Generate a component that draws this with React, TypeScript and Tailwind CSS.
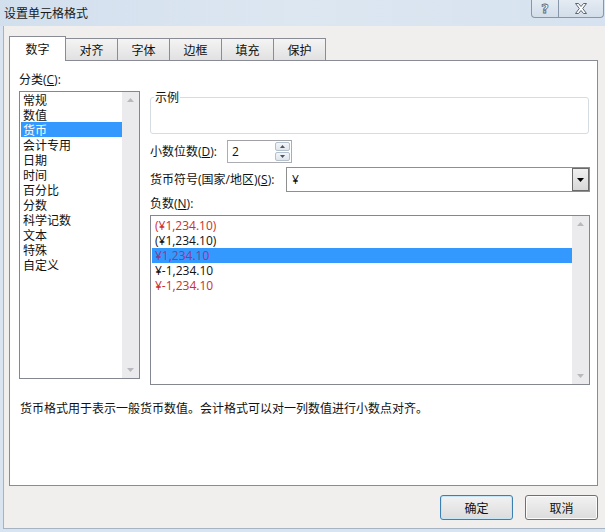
import React from "react";

const cats = ["常规", "数值", "货币", "会计专用", "日期", "时间", "百分比", "分数", "科学记数", "文本", "特殊", "自定义"];
const negs = [
  { t: "(¥1,234.10)", c: "text-[#cc2f2f]", sel: false },
  { t: "(¥1,234.10)", c: "text-[#111]", sel: false },
  { t: "¥1,234.10", c: "text-[#8b3a8e]", sel: true },
  { t: "¥-1,234.10", c: "text-[#111]", sel: false },
  { t: "¥-1,234.10", c: "text-[#cc2f2f]", sel: false },
];
const tabs = ["对齐", "字体", "边框", "填充", "保护"];

function ArrowUp() {
  return (
    <svg width="7" height="4" viewBox="0 0 7 4">
      <path d="M3.5 0 L7 4 L0 4 Z" fill="#b9b9bd" />
    </svg>
  );
}
function ArrowDown() {
  return (
    <svg width="7" height="4" viewBox="0 0 7 4">
      <path d="M0 0 L7 0 L3.5 4 Z" fill="#b9b9bd" />
    </svg>
  );
}

function ScrollBar() {
  return (
    <div className="w-[17px] h-full bg-[#ebebee] flex flex-col items-center justify-between py-[6px]">
      <ArrowUp />
      <ArrowDown />
    </div>
  );
}

export default function App() {
  return (
    <div className="w-[605px] h-[532px] bg-[#d9e4f0] flex flex-col text-[12px] leading-[16px] text-[#111] font-['Open_Sans','Noto_Sans_CJK_SC',sans-serif] overflow-hidden">
      {/* title bar */}
      <div className="h-[26px] shrink-0 flex items-start bg-gradient-to-r from-[#d2dfed] via-[#dde7f2] to-[#d6e2ef]">
        <div className="pl-[4px] pt-[5px] font-['Noto_Sans_CJK_SC',sans-serif] text-[#1a1a1a]">设置单元格格式</div>
        <div className="ml-auto mr-[1px] flex h-[18px]">
          <div className="w-[28px] h-[18px] border border-t-0 border-[#8796a8] rounded-bl-[4px] bg-gradient-to-b from-[#e4ebf3] to-[#d3deea] flex items-center justify-center">
            <span className="text-[13px] leading-[13px] font-bold text-white [-webkit-text-stroke:0.8px_#5b6573] font-['DejaVu_Sans',sans-serif]">?</span>
          </div>
          <div className="w-[45px] h-[18px] border border-t-0 border-l-0 border-[#8796a8] rounded-br-[4px] bg-gradient-to-b from-[#e4ebf3] to-[#d3deea] flex items-center justify-center">
            <svg width="12" height="11" viewBox="0 0 12 11">
              <path
                d="M0.5 0.5 H3.5 L6 3.5 L8.5 0.5 H11.5 L7.7 5.5 L11.5 10.5 H8.5 L6 7.5 L3.5 10.5 H0.5 L4.3 5.5 Z"
                fill="#fff"
                stroke="#5b6573"
                strokeWidth="1"
              />
            </svg>
          </div>
        </div>
      </div>

      {/* body */}
      <div className="flex-1 ml-[3px] mb-[3px] border-l border-b border-[#a6b3c2] bg-[#f1efee] flex flex-col pl-[5px] pt-[10px]">
        {/* tabs */}
        <div className="relative z-10 -mb-px flex items-end h-[25px]">
          <div className="w-[57px] h-[25px] bg-white border border-b-0 border-[#898c95] flex items-center justify-center font-['Noto_Sans_CJK_SC',sans-serif]">
            数字
          </div>
          {tabs.map((t) => (
            <div
              key={t}
              className="w-[53px] h-[22px] mb-px -ml-px first:ml-0 bg-gradient-to-b from-[#f4f4f4] to-[#e1e1e1] border border-b-0 border-[#898c95] flex items-center justify-center font-['Noto_Sans_CJK_SC',sans-serif]"
            >
              {t}
            </div>
          ))}
        </div>

        {/* panel */}
        <div className="w-[589px] h-[426px] bg-white border border-[#898c95] flex flex-col">
          <div className="flex pl-[9px] pt-[11px]">
            {/* left column */}
            <div className="w-[121px] flex flex-col">
              <div className="h-[16px]">
                分类(<u>C</u>):
              </div>
              <div className="mt-[3px] h-[288px] border border-[#828790] flex pl-px">
                <div className="w-[101px] flex flex-col pt-0">
                  {cats.map((c) => (
                    <div
                      key={c}
                      className={
                        "h-[15px] leading-[15px] pl-[2px] font-['Noto_Sans_CJK_SC',sans-serif] " +
                        (c === "货币" ? "bg-[#3399ff] text-white" : "")
                      }
                    >
                      {c}
                    </div>
                  ))}
                </div>
                <ScrollBar />
              </div>
            </div>

            {/* right column */}
            <div className="ml-[10px] w-[440px] flex flex-col">
              <div className="relative mt-[25px] h-[37px] w-[439px] border border-[#d5dde3] rounded-[3px]">
                <span className="absolute left-[3px] top-[-9px] bg-white px-[1px] font-['Noto_Sans_CJK_SC',sans-serif]">示例</span>
              </div>

              <div className="mt-[6px] flex items-center h-[23px]">
                <div className="w-[77px]">
                  小数位数(<u>D</u>):
                </div>
                <div className="w-[65px] h-[23px] border border-[#abadb3] border-t-[#a0a2a8] flex items-center">
                  <span className="pl-[4px] flex-1">2</span>
                  <div className="w-[16px] h-[21px] flex flex-col gap-px py-px pr-px">
                    <div className="flex-1 border border-[#b4c0cc] bg-gradient-to-b from-[#f3f6f9] to-[#dfe6ed] rounded-[2px] flex items-center justify-center">
                      <svg width="5" height="3" viewBox="0 0 5 3">
                        <path d="M2.5 0 L5 3 L0 3 Z" fill="#4c5560" />
                      </svg>
                    </div>
                    <div className="flex-1 border border-[#b4c0cc] bg-gradient-to-b from-[#f3f6f9] to-[#dfe6ed] rounded-[2px] flex items-center justify-center">
                      <svg width="5" height="3" viewBox="0 0 5 3">
                        <path d="M0 0 L5 0 L2.5 3 Z" fill="#4c5560" />
                      </svg>
                    </div>
                  </div>
                </div>
              </div>

              <div className="mt-[4px] flex items-center h-[25px]">
                <div className="w-[136px]">
                  货币符号(国家/地区)(<u>S</u>):
                </div>
                <div className="w-[304px] h-[25px] border border-[#8e8f8f] bg-white flex items-center">
                  <span className="pl-[5px] flex-1">¥</span>
                  <div className="w-[17px] h-[23px] border border-[#6a6a6a] bg-gradient-to-b from-[#f0f0f0] to-[#d8d8d8] flex items-center justify-center">
                    <svg width="7" height="4" viewBox="0 0 7 4">
                      <path d="M0 0 L7 0 L3.5 4 Z" fill="#000" />
                    </svg>
                  </div>
                </div>
              </div>

              <div className="mt-[4px] h-[16px]">
                负数(<u>N</u>):
              </div>
              <div className="mt-[3px] h-[170px] border border-[#828790] flex pl-px pt-px">
                <div className="flex-1 flex flex-col pt-px">
                  {negs.map((n, i) => (
                    <div
                      key={i}
                      className={"h-[15px] leading-[15px] pl-[3px] " + n.c + (n.sel ? " bg-[#3399ff]" : "")}
                    >
                      {n.t}
                    </div>
                  ))}
                </div>
                <div className="-mt-px h-[168px]">
                  <ScrollBar />
                </div>
              </div>
            </div>
          </div>

          <div className="mt-[15px] pl-[10px] h-[16px] font-['Noto_Sans_CJK_SC',sans-serif]">
            货币格式用于表示一般货币数值。会计格式可以对一列数值进行小数点对齐。
          </div>
        </div>

        {/* buttons */}
        <div className="mt-[9px] flex justify-end gap-[12px] pr-[7px]">
          <button className="w-[73px] h-[25px] rounded-[3px] border border-[#3c7fb1] shadow-[inset_0_0_0_1px_#c5e5f8] bg-gradient-to-b from-[#f2f2f2] to-[#dcdcdc] flex items-center justify-center font-['Noto_Sans_CJK_SC',sans-serif]">
            确定
          </button>
          <button className="w-[73px] h-[25px] rounded-[3px] border border-[#707070] shadow-[inset_0_0_0_1px_#fbfbfb] bg-gradient-to-b from-[#f2f2f2] to-[#dcdcdc] flex items-center justify-center font-['Noto_Sans_CJK_SC',sans-serif]">
            取消
          </button>
        </div>
      </div>
    </div>
  );
}
